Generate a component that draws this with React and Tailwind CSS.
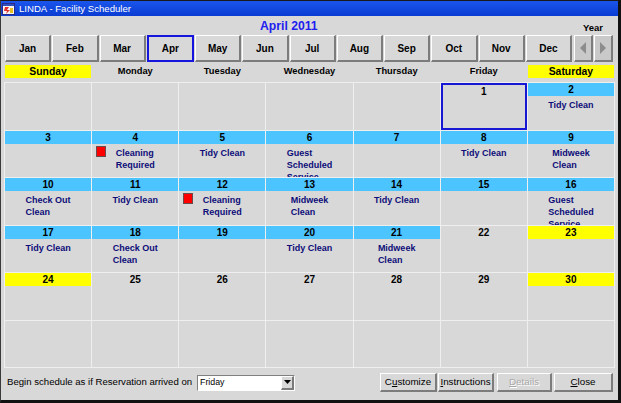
import React from 'react';
import clsx from 'clsx';

const months = ['Jan', 'Feb', 'Mar', 'Apr', 'May', 'Jun', 'Jul', 'Aug', 'Sep', 'Oct', 'Nov', 'Dec'];
const weekdays = ['Sunday', 'Monday', 'Tuesday', 'Wednesday', 'Thursday', 'Friday', 'Saturday'];

const tasks = {
    2: { lines: ['Tidy Clean'] },
    4: { lines: ['Cleaning', 'Required'], flag: true },
    5: { lines: ['Tidy Clean'] },
    6: { lines: ['Guest', 'Scheduled', 'Service'] },
    8: { lines: ['Tidy Clean'] },
    9: { lines: ['Midweek', 'Clean'] },
    10: { lines: ['Check Out', 'Clean'] },
    11: { lines: ['Tidy Clean'] },
    12: { lines: ['Cleaning', 'Required'], flag: true },
    13: { lines: ['Midweek', 'Clean'] },
    14: { lines: ['Tidy Clean'] },
    16: { lines: ['Guest', 'Scheduled', 'Service'] },
    17: { lines: ['Tidy Clean'] },
    18: { lines: ['Check Out', 'Clean'] },
    20: { lines: ['Tidy Clean'] },
    21: { lines: ['Midweek', 'Clean'] },
};

// April 2011 starts on a Friday
const cells = Array.from({ length: 42 }, (_, i) => {
    const n = i - 4;
    return n >= 1 && n <= 30 ? n : null;
});

const bandFor = (n) => {
    if (n === 1) return 'sel';
    if (n >= 2 && n <= 21) return 'blue';
    if (n === 23 || n === 24 || n === 30) return 'yellow';
    return 'none';
};

const raised = 'border-t border-l border-t-white border-l-white border-r-2 border-b-2 border-r-[#7c7c7c] border-b-[#7c7c7c]';

const DayCell = ({ n }) => {
    const band = n ? bandFor(n) : null;
    const task = n ? tasks[n] : null;
    return (
        <div className={clsx('relative overflow-hidden bg-[#d8d8d8]', band === 'sel' && 'shadow-[inset_0_0_0_2px_#1717d4]')}>
            {n && (
                <div className={clsx(
                    'h-[13px] text-center text-[10px] font-bold leading-[13px] text-black',
                    band === 'blue' && 'bg-[#4cc4ff]',
                    band === 'yellow' && 'bg-[#ffff00]',
                    band === 'sel' && 'pt-[2px]'
                )}>
                    {n}
                </div>
            )}
            {task && (
                <div className="mt-[3px] text-center text-[9px] font-bold leading-[12px] text-[#0d0d78]">
                    <div className="inline-block text-left whitespace-nowrap">
                        {task.lines.map((l) => (
                            <div key={l}>{l}</div>
                        ))}
                    </div>
                </div>
            )}
            {task && task.flag && (
                <div className="absolute left-[4px] top-[15px] h-[11px] w-[10px] border border-[#6a4a4a] bg-[#ff0000]" />
            )}
        </div>
    );
};

const ArrowBtn = ({ dir }) => (
    <div className={clsx('flex h-[27px] w-[19px] items-center justify-center bg-[#c9c9c9]', raised)}>
        <svg width="6" height="12" viewBox="0 0 6 12">
            {dir === 'left'
                ? <polygon points="6,0 0,6 6,12" fill="#8c8c8c" />
                : <polygon points="0,0 6,6 0,12" fill="#8c8c8c" />}
        </svg>
    </div>
);

const FootBtn = ({ w, children, disabled }) => (
    <div className={clsx('flex h-[19px] items-center justify-center bg-[#d8d8d8] text-[9.8px]', raised, w,
        disabled ? 'text-[#a8a8a8] [text-shadow:1px_1px_0_#fff]' : 'text-black')}>
        {children}
    </div>
);

export default function App() {
    return (
        <div className="flex h-[403px] w-[621px] flex-col border-l border-t border-l-[#3a3a3a] border-t-[#1a1a1a] border-r-[3px] border-b-[3px] border-r-[#111] border-b-[#111] bg-[#d8d8d8] font-['Liberation_Sans',Arial,sans-serif]">
            {/* title bar */}
            <div className="flex h-[15px] items-center gap-[4px] bg-gradient-to-b from-[#1b55ec] to-[#0a3cd2] pl-[1px]">
                <svg width="13" height="12" viewBox="0 0 13 12">
                    <rect x="0.5" y="0.5" width="12" height="11" fill="#f4f4f4" stroke="#2a2a8a" />
                    <rect x="1" y="1" width="11" height="2" fill="#3050c0" />
                    <polygon points="3,4 7,4 5,7 8,7 4,11 5,8 2,8" fill="#e03030" />
                    <rect x="8" y="5" width="3" height="5" fill="#e8c020" />
                </svg>
                <span className="text-[9.6px] leading-none text-white">LINDA - Facility Scheduler</span>
            </div>

            {/* month / year header */}
            <div className="flex h-[19px] items-end pb-[3px]">
                <span className="ml-[259px] text-[12.2px] font-bold leading-none text-[#2020f0]">April 2011</span>
                <span className="ml-auto mr-[15px] text-[9.5px] font-bold leading-none text-black">Year</span>
            </div>

            {/* months */}
            <div className="flex h-[27px] items-stretch pl-[4px]">
                <div className="flex w-[567px] gap-[1px]">
                    {months.map((m) => (
                        <div
                            key={m}
                            className={clsx(
                                'flex flex-1 items-center justify-center bg-[#d8d8d8] text-[10px] font-bold text-black',
                                m === 'Apr' ? 'border-2 border-[#1515dd]' : raised
                            )}
                        >
                            {m}
                        </div>
                    ))}
                </div>
                <div className="ml-[2px] flex gap-[1px]">
                    <ArrowBtn dir="left" />
                    <ArrowBtn dir="right" />
                </div>
            </div>

            {/* weekday names */}
            <div className="mt-[3px] ml-[4px] grid h-[13px] w-[609px] grid-cols-7 gap-px">
                {weekdays.map((d) => {
                    const wk = d === 'Sunday' || d === 'Saturday';
                    return (
                        <div
                            key={d}
                            className={clsx(
                                'text-center font-bold leading-[13px] text-black',
                                wk ? 'bg-[#ffff00] text-[10.4px]' : 'text-[9.3px]'
                            )}
                        >
                            {d}
                        </div>
                    );
                })}
            </div>

            {/* calendar grid */}
            <div className="mt-[4px] ml-[3px] w-[611px] bg-[#efefef] p-px">
                <div className="grid h-[284px] grid-cols-7 grid-rows-6 gap-px">
                    {cells.map((n, i) => (
                        <DayCell key={i} n={n} />
                    ))}
                </div>
            </div>

            {/* footer */}
            <div className="mt-[5px] flex h-[19px] items-center pl-[6px] pr-[5px]">
                <span className="text-[9.6px] text-black">Begin schedule as if Reservation arrived on</span>
                <div className="ml-[5px] flex h-[16px] w-[98px] items-stretch border border-t-[#808080] border-l-[#808080] border-r-white border-b-white bg-white">
                    <span className="flex-1 pl-[2px] text-[8.8px] leading-[13px] text-black">Friday</span>
                    <div className={clsx('flex w-[13px] items-center justify-center bg-[#d8d8d8]', raised)}>
                        <svg width="7" height="4" viewBox="0 0 7 4">
                            <polygon points="0,0 7,0 3.5,4" fill="#000" />
                        </svg>
                    </div>
                </div>
                <div className="ml-auto flex items-center">
                    <FootBtn w="w-[57px]">C<span className="underline">u</span>stomize</FootBtn>
                    <div className="ml-[1px]">
                        <FootBtn w="w-[56px]"><span className="underline">I</span>nstructions</FootBtn>
                    </div>
                    <div className="ml-[3px]">
                        <FootBtn w="w-[55px]" disabled><span className="underline">D</span>etails</FootBtn>
                    </div>
                    <div className="ml-[2px]">
                        <FootBtn w="w-[59px]"><span className="underline">C</span>lose</FootBtn>
                    </div>
                </div>
            </div>
        </div>
    );
}
